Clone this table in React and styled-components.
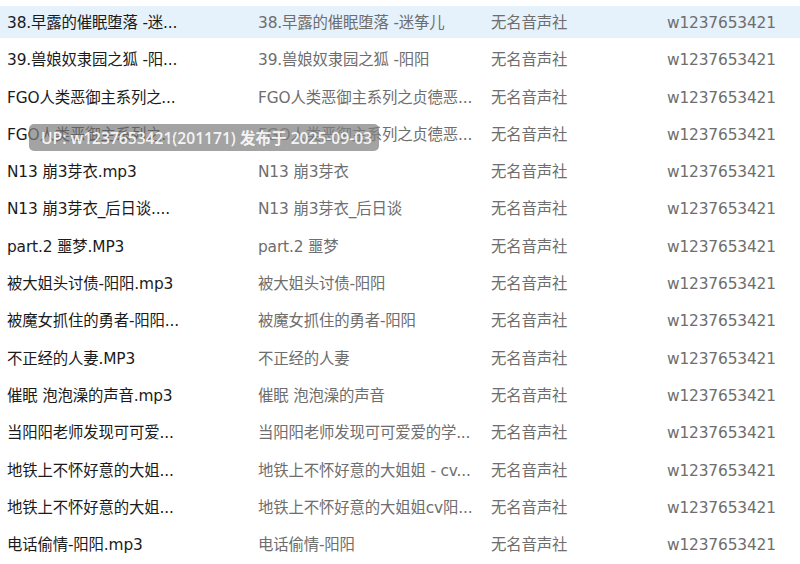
import React from "react";
import styled, { createGlobalStyle } from "styled-components";

const Global = createGlobalStyle`
  html, body { margin: 0; padding: 0; background: #ffffff; }
  body { width: 800px; height: 564px; overflow: hidden; }
`;

const Page = styled.div`
  position: relative;
  width: 800px;
  height: 564px;
  background: #fff;
  font-family: "DejaVu Sans", "Noto Sans CJK SC", sans-serif;
  font-size: 15.4px;
  padding-top: 6px;
  box-sizing: border-box;
`;

const List = styled.div`
  display: flex;
  flex-direction: column;
  gap: 5.3px;
`;

const Row = styled.div`
  display: grid;
  grid-template-columns: 251px 233px 176px 1fr;
  align-items: center;
  height: 32px;
  padding-left: 7px;
  background: ${(p) => (p.$active ? "#e5f1fb" : "transparent")};
`;

const Cell = styled.div`
  white-space: nowrap;
  overflow: hidden;
  color: ${(p) => (p.$primary ? "#1b1b1b" : "#6e6e6e")};
  line-height: 30px;
  padding-top: 2px;
  letter-spacing: -0.15px;
`;

const Watermark = styled.div`
  position: absolute;
  left: 29px;
  top: 124px;
  width: 350px;
  height: 27px;
  border-radius: 5px;
  background: rgba(128, 128, 128, 0.72);
  color: rgba(255, 255, 255, 0.9);
  font-family: "Open Sans", "Noto Sans CJK SC", sans-serif;
  font-weight: 600;
  font-size: 15.6px;
  line-height: 29px;
  padding-left: 12px;
  box-sizing: border-box;
  white-space: nowrap;
`;

const rows = [
  ["38.早露的催眠堕落 -迷...", "38.早露的催眠堕落 -迷筝儿"],
  ["39.兽娘奴隶园之狐 -阳...", "39.兽娘奴隶园之狐 -阳阳"],
  ["FGO人类恶御主系列之...", "FGO人类恶御主系列之贞德恶..."],
  ["FGO人类恶御主系列之...", "FGO人类恶御主系列之贞德恶..."],
  ["N13 崩3芽衣.mp3", "N13 崩3芽衣"],
  ["N13 崩3芽衣_后日谈....", "N13 崩3芽衣_后日谈"],
  ["part.2 噩梦.MP3", "part.2 噩梦"],
  ["被大姐头讨债-阳阳.mp3", "被大姐头讨债-阳阳"],
  ["被魔女抓住的勇者-阳阳...", "被魔女抓住的勇者-阳阳"],
  ["不正经的人妻.MP3", "不正经的人妻"],
  ["催眠 泡泡澡的声音.mp3", "催眠 泡泡澡的声音"],
  ["当阳阳老师发现可可爱...", "当阳阳老师发现可可爱爱的学..."],
  ["地铁上不怀好意的大姐...", "地铁上不怀好意的大姐姐 - cv..."],
  ["地铁上不怀好意的大姐...", "地铁上不怀好意的大姐姐cv阳..."],
  ["电话偷情-阳阳.mp3", "电话偷情-阳阳"],
];

export default function App() {
  return (
    <Page>
      <Global />
      <List>
        {rows.map(([a, b], i) => (
          <Row key={i} $active={i === 0}>
            <Cell $primary>{a}</Cell>
            <Cell>{b}</Cell>
            <Cell>无名音声社</Cell>
            <Cell>w1237653421</Cell>
          </Row>
        ))}
      </List>
      <Watermark>UP: w1237653421(201171) 发布于 2025-09-03</Watermark>
    </Page>
  );
}
